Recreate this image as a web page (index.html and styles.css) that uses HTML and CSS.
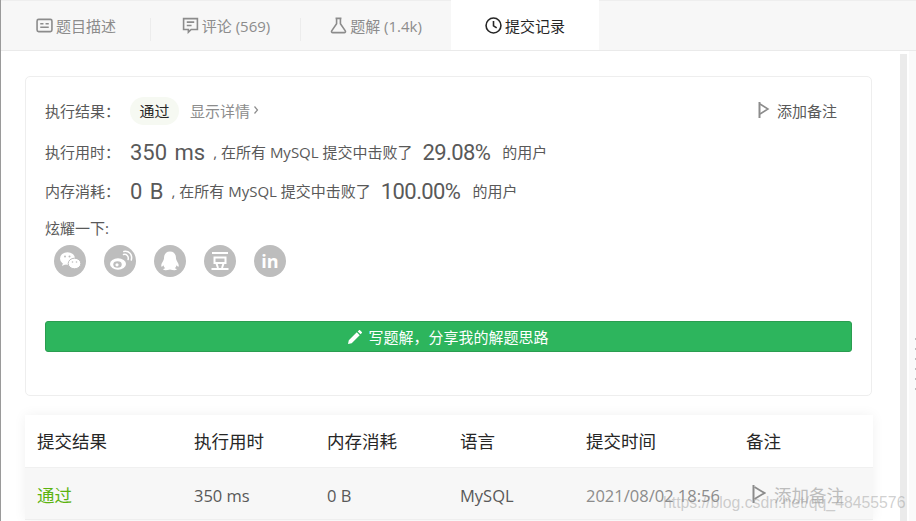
FILE: index.html
```html
<!DOCTYPE html>
<html lang="zh">
<head>
<meta charset="utf-8">
<title>提交记录</title>
<link rel="stylesheet" href="styles.css">
</head>
<body>
<div class="app">
  <nav class="tabs">
    <a class="tab">
      <svg class="tab-icon" viewBox="0 0 16 16"><rect x="1" y="2.200" width="14" height="11.600" rx="1.500" class="st"/><path d="M4 6.300h3M9 6.300h3M4 9.700h8" class="st"/></svg>
      <span>题目描述</span>
    </a>
    <a class="tab">
      <svg class="tab-icon" viewBox="0 0 16 16"><path d="M1.500 1.500h13v10.200H8.600L6 14.300v-2.600H1.500z" class="st"/><path d="M4.500 4.800h7M4.500 8h4.500" class="st"/></svg>
      <span>评论 (569)</span>
    </a>
    <a class="tab">
      <svg class="tab-icon" viewBox="0 0 16 16"><path d="M5.200 1.300h5.600M6.200 1.300v5L1.600 13c-.5.900 0 1.700 1 1.700h10.800c1 0 1.500-.8 1-1.700L9.800 6.300v-5" class="st"/></svg>
      <span>题解 (1.4k)</span>
    </a>
    <a class="tab tab-active">
      <svg class="tab-icon" viewBox="0 0 16 16"><circle cx="8" cy="8" r="7" class="st-dark"/><path d="M8 3.800V8.300l3 2" class="st-dark"/></svg>
      <span>提交记录</span>
    </a>
  </nav>
  <div class="body">
    <main class="content">
      <section class="card">
        <div class="line line-result">
          <span class="label">执行结果：</span>
          <span class="pill">通过</span>
          <span class="details">显示详情</span>
          <svg class="chev" viewBox="0 0 6 10"><path d="M1.500 1.500 4.500 5l-3 3.500"/></svg>
          <span class="note">
            <svg class="flag" viewBox="0 0 12 16"><path d="M1.500 0v16" class="flag-pole"/><path d="M2 2l8 5-8 5" class="flag-cloth"/></svg>
            添加备注
          </span>
        </div>
        <div class="line line-stat">
          <span class="label">执行用时：</span>
          <span class="big big-val">350 ms</span>
          <span class="txt">, 在所有 MySQL 提交中击败了</span>
          <span class="big big-pct">29.08%</span>
          <span class="txt">的用户</span>
        </div>
        <div class="line line-stat">
          <span class="label">内存消耗：</span>
          <span class="big big-val">0 B</span>
          <span class="txt">, 在所有 MySQL 提交中击败了</span>
          <span class="big big-pct">100.00%</span>
          <span class="txt">的用户</span>
        </div>
        <div class="show">炫耀一下:</div>
        <div class="socials">
          <span class="soc"><svg viewBox="0 0 32 32"><ellipse cx="13.500" cy="13.500" rx="7.500" ry="6.300" fill="#fff"/><path d="M9 18l-1 3 4-2z" fill="#fff"/><ellipse cx="20.500" cy="18.500" rx="6.300" ry="5.300" fill="#fff" stroke="#bdbdbd"/><circle cx="11" cy="11.500" r="1" fill="#bdbdbd"/><circle cx="15.500" cy="11.500" r="1" fill="#bdbdbd"/><circle cx="18.500" cy="17" r=".8" fill="#bdbdbd"/><circle cx="22.500" cy="17" r=".8" fill="#bdbdbd"/></svg></span>
          <span class="soc"><svg viewBox="0 0 32 32"><ellipse cx="14" cy="19" rx="8" ry="5.800" fill="#fff"/><ellipse cx="13.500" cy="19.500" rx="4.200" ry="3.200" fill="#bdbdbd"/><circle cx="13" cy="19.800" r="1.600" fill="#fff"/><path d="M19.500 9.500c3-.8 5.500 1.800 4.600 5M19.800 6.500c5-1 9 3 7.500 8.500" fill="none" stroke="#fff" stroke-width="1.500" stroke-linecap="round"/></svg></span>
          <span class="soc"><svg viewBox="0 0 32 32"><path d="M16 6.500c-4 0-6 3-6 6.500 0 1-.2 1.700-.9 2.900-1.100 1.800-2.300 4-1.700 5.600.5.700 1.300-.3 2-1.200.3 1.300 1 2.300 1.800 3-1.400.5-2.300 1-1.800 1.500 1 .6 4 .5 6.600-.3 2.600.8 5.600.9 6.600.3.500-.5-.4-1-1.800-1.500.8-.7 1.500-1.700 1.800-3 .7.900 1.500 1.900 2 1.200.6-1.600-.6-3.800-1.700-5.600-.7-1.200-.9-1.900-.9-2.900 0-3.500-2-6.500-6-6.500z" fill="#fff"/></svg></span>
          <span class="soc"><svg viewBox="0 0 32 32"><path d="M8 8h16M10.500 12.500h11v5.500h-11zM12.500 18.500l1.500 4.500M19.500 18.500 18 23M7.500 24h17" fill="none" stroke="#fff" stroke-width="2"/></svg></span>
          <span class="soc soc-in">in</span>
        </div>
        <button class="write" type="button">
          <svg class="pen" viewBox="0 0 14 14"><path d="M0 14l.8-3.700L8.800 2.300l2.900 2.900-8 8zM9.700 1.400 11 .2c.3-.3.700-.3 1 0l1.800 1.800c.3.300.3.700 0 1l-1.200 1.300z"/></svg>
          写题解，分享我的解题思路
        </button>
      </section>
      <section class="table">
        <div class="row head">
          <span>提交结果</span><span>执行用时</span><span>内存消耗</span><span>语言</span><span>提交时间</span><span>备注</span>
        </div>
        <div class="row data">
          <span class="ok">通过</span><span>350 ms</span><span>0 B</span><span>MySQL</span><span class="time">2021/08/02 18:56</span>
          <span class="addnote"><svg class="flag-lg" viewBox="0 0 14 18"><path d="M1.500 0v18" class="flag-pole2"/><path d="M2.500 2l10 6-10 6" class="flag-cloth2"/></svg>添加备注</span>
        </div>
      </section>
    </main>
    <div class="track"></div>
    <aside class="split"><i></i><i></i><i></i><i></i><i></i><i></i></aside>
  </div>
</div>
<div class="mark">https://blog.csdn.net/qq_48455576</div>
</body>
</html>
```
FILE: styles.css
```css
* { box-sizing: border-box; }
html, body { margin: 0; height: 100%; overflow: hidden; background: #fff; }
body {
  font-family: "Open Sans", "Noto Sans CJK SC", sans-serif;
  font-size: 15px;
  color: #595959;
}
.app {
  height: 521px;
  border-left: 1px solid #9a9a9a;
  display: flex;
  flex-direction: column;
}
.tabs {
  flex: none;
  height: 51px;
  display: flex;
  background: #f7f7f7;
  border-top: 1px solid #eee;
  border-bottom: 1px solid #eaeaea;
}
.tab {
  position: relative;
  width: 150px;
  display: flex;
  align-items: center;
  justify-content: center;
  gap: 3px;
  color: #8c8c8c;
  font-size: 15px;
}
.tab:not(.tab-active):not(:nth-child(3))::after {
  content: "";
  position: absolute;
  right: 0;
  top: 17px;
  height: 23px;
  width: 1px;
  background: #ececec;
}
.tab-active {
  width: 148px;
  height: 50px;
  margin-top: -1px;
  background: #fff;
  color: #262626;
}
.tab-icon { width: 17px; height: 17px; flex: none; }
.st { fill: none; stroke: #8c8c8c; stroke-width: 1.500; }
.st-dark { fill: none; stroke: #262626; stroke-width: 1.500; }
.body { flex: 1; display: flex; min-height: 0; }
.content { width: 899px; flex: none; padding: 25px 27px 0 24px; }
.track { width: 7px; flex: none; margin-top: 3px; background: #ebebeb; }
.split {
  flex: 1;
  margin-left: 2px;
  background: #fafafa;
  display: flex;
  flex-direction: column;
  align-items: flex-end;
  gap: 8px;
  padding-top: 287px;
}
.split i { width: 1px; height: 2px; background: #bdbdbd; display: block; }
.card {
  width: 847px;
  height: 320px;
  border: 1px solid #eeeeee;
  border-radius: 5px;
  padding: 0 19px;
  display: flex;
  flex-direction: column;
}
.line { display: flex; align-items: center; }
.line-result { height: 28px; margin-top: 20px; }
.line-result > * { position: relative; top: -1px; }
.line-result .pill { top: 0; padding-bottom: 2px; }
.label { font-size: 15px; width: 85px; flex: none; }
.pill {
  width: 49px;
  height: 28px;
  border-radius: 14px;
  background: #f6f9f2;
  color: #262626;
  display: flex;
  align-items: center;
  justify-content: center;
  margin-right: 11px;
}
.details { color: #8c8c8c; }
.chev { width: 6px; height: 10px; margin-left: 3px; fill: none; stroke: #8c8c8c; stroke-width: 1.200; }
.note { margin-left: auto; margin-right: 15px; display: flex; align-items: center; gap: 7px; }
.flag { width: 12px; height: 16px; }
.flag-pole { stroke: #8c8c8c; stroke-width: 2; fill: none; }
.flag-cloth { stroke: #8c8c8c; stroke-width: 1.500; fill: none; }
.line-stat { height: 30px; margin-top: 9px; }
.line-stat .label, .line-stat .txt { padding-bottom: 2px; }
.line-result + .line-stat { margin-top: 12px; }
.big { font-family: "Roboto", "Noto Sans", sans-serif; font-size: 22px; color: #595959; }
.big-val { margin-right: 8px; word-spacing: 2px; }
.big-pct { margin: 0 12px 0 10px; letter-spacing: -.6px; }
.txt { font-size: 15px; }
.show { margin-top: 12px; height: 21px; line-height: 21px; }
.socials { display: flex; gap: 18px; margin: 6px 0 0 9px; }
.soc {
  width: 32px;
  height: 32px;
  border-radius: 50%;
  background: #bdbdbd;
  display: flex;
  align-items: center;
  justify-content: center;
}
.soc svg { width: 32px; height: 32px; display: block; }
.soc-in { color: #fff; font: 700 18px "Open Sans", sans-serif; }
.write {
  margin-top: 44px;
  height: 31px;
  width: 807px;
  border: 1px solid #2a9d50;
  border-radius: 3px;
  background: #2db55d;
  color: #fff;
  font: inherit;
  display: flex;
  align-items: center;
  justify-content: center;
  gap: 6px;
  padding: 0;
}
.pen { width: 14px; height: 14px; fill: #fff; }
.table {
  margin-top: 19px;
  width: 848px;
  box-shadow: 0 0 12px rgba(0, 0, 0, .06);
}
.row {
  display: grid;
  grid-template-columns: 157px 133px 133px 126px 160px 1fr;
  padding-left: 12px;
  align-items: center;
}
.head { height: 53px; padding-bottom: 2px; color: #262626; font-size: 17.500px; border-bottom: 1px solid #f0f0f0; }
.data { height: 52px; padding-top: 3px; background: #f7f7f7; border-bottom: 1px solid #eee; font-size: 16.500px; }
.ok { color: #5cb30f; font-size: 17.500px; margin-top: -2px; }
.time { color: #8c8c8c; }
.addnote { display: flex; align-items: center; gap: 8px; color: #bdbdbd; margin-left: 6px; font-size: 17.500px; margin-top: -2px; }
.flag-lg { width: 14px; height: 18px; flex: none; }
.flag-pole2 { stroke: #8c8c8c; stroke-width: 2; fill: none; }
.flag-cloth2 { stroke: #8c8c8c; stroke-width: 1.800; fill: none; }
.mark {
  position: absolute;
  left: 663px;
  top: 494px;
  font: 15.800px "Liberation Sans", sans-serif;
  color: rgba(150, 150, 150, .45);
  white-space: nowrap;
}
```
